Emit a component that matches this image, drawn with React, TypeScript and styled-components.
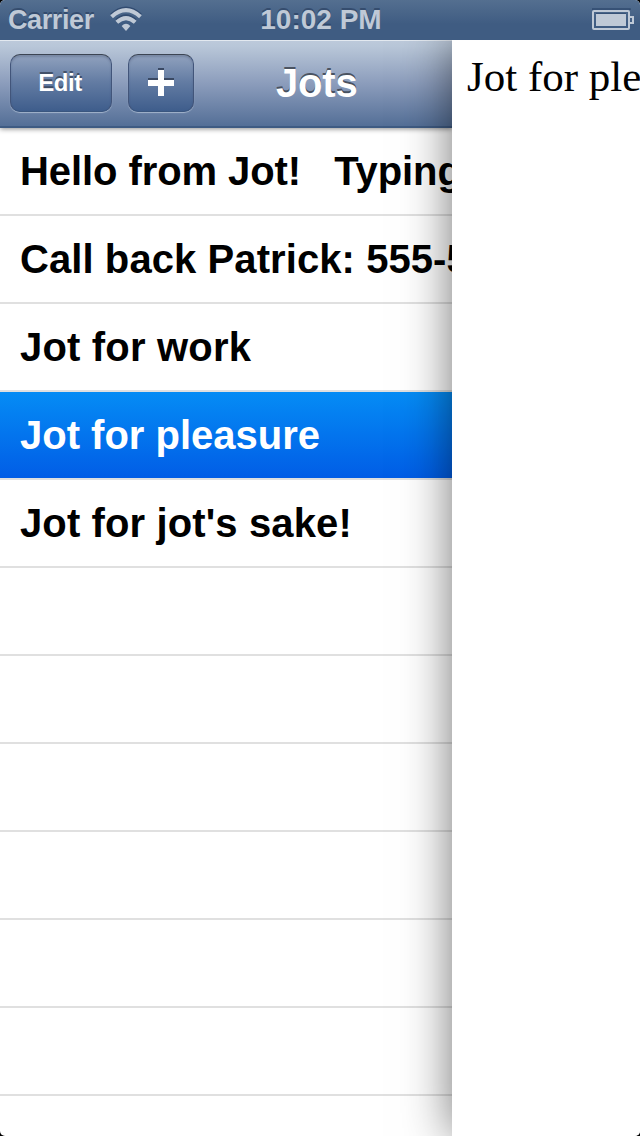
import React from "react";
import styled, { createGlobalStyle } from "styled-components";

const GlobalStyle = createGlobalStyle`
  body { margin: 0; background: #000; }
  * { box-sizing: border-box; }
`;

const Screen = styled.div`
  width: 640px;
  height: 1136px;
  display: flex;
  flex-direction: column;
  overflow: hidden;
  border-radius: 5px;
  background: #fff;
  font-family: "Liberation Sans", Arial, sans-serif;
  font-weight: bold;
`;

const StatusBar = styled.header`
  position: relative;
  z-index: 2;
  flex: none;
  height: 40px;
  display: grid;
  grid-template-columns: 1fr auto 1fr;
  align-items: center;
  padding: 0 6px 0 8px;
  font-size: 28px;
  line-height: 40px;
  color: #bfc9d6;
  text-shadow: 0 -2px 0 rgba(30, 50, 82, 0.5);
  background: linear-gradient(#546f90, #3f5c82 60%, #3f5c82);
`;

const Carrier = styled.div`
  display: flex;
  align-items: center;
  gap: 16px;
  font-size: 27px;
  letter-spacing: -0.4px;
`;

const WifiIcon = styled.svg`
  margin-bottom: 2px;
`;

const Battery = styled.svg`
  justify-self: end;
  margin-top: -2px;
`;

const Body = styled.div`
  flex: 1;
  min-height: 0;
  display: flex;
`;

const Sidebar = styled.aside`
  width: 452px;
  flex: none;
  overflow: hidden;
  display: flex;
  flex-direction: column;
`;

const NavBar = styled.nav`
  position: relative;
  flex: none;
  height: 88px;
  display: flex;
  align-items: flex-start;
  gap: 16px;
  padding: 14px 10px 0;
  border-bottom: 2px solid #3e5b83;
  background: linear-gradient(#bdcadb, #b8c6d8 8%, #8c9dbc 50%, #546f97);
  box-shadow: inset 0 1px 0 #e3e9f0, 0 1px 5px rgba(0, 0, 0, 0.45);
`;

const NavButton = styled.button<{ $width: number }>`
  width: ${({ $width }) => $width}px;
  height: 58px;
  display: flex;
  align-items: center;
  justify-content: center;
  padding: 0;
  border: 1.5px solid;
  border-color: #3c4554 #42557a #3a567f;
  border-radius: 10px;
  background: linear-gradient(#92a3bf, #637ca3 48%, #3d5c8b) border-box;
  box-shadow: inset 0 2px 2px rgba(50, 65, 90, 0.25), 0 1px 1px rgba(205, 217, 232, 0.6);
  color: #fff;
  font: bold 24px "Liberation Sans", Arial, sans-serif;
  letter-spacing: -0.4px;
  text-shadow: 0 -2px 0 rgba(50, 62, 82, 0.75);
`;

const ButtonLabel = styled.span`
  padding-right: 2px;
`;

const PlusIcon = styled.svg`
  margin-bottom: 2px;
`;

const Title = styled.h1`
  margin: 0 0 0 66px;
  font-size: 40px;
  line-height: 58px;
  letter-spacing: -0.2px;
  color: #fff;
  text-shadow: 0 -2px 0 rgba(60, 68, 80, 0.85);
`;

const List = styled.ul`
  margin: 0;
  padding: 0;
  list-style: none;
`;

const Row = styled.li<{ $selected?: boolean; $tracking?: number }>`
  height: 88px;
  padding-left: 20px;
  border-bottom: 2px solid #e0e0e0;
  font-size: 40px;
  line-height: 87px;
  letter-spacing: ${({ $tracking = 0 }) => $tracking}px;
  white-space: pre;
  color: ${({ $selected }) => ($selected ? "#fff" : "#000")};
  background: ${({ $selected }) =>
    $selected ? "linear-gradient(#058cf5, #015de6) padding-box" : "none"};
`;

const Note = styled.main`
  position: relative;
  flex: 1;
  min-width: 0;
  background: #fff;
  box-shadow: 0 0 46px rgba(0, 0, 0, 0.55);
`;

const NoteText = styled.p`
  margin: 0;
  padding: 11px 0 0 15px;
  overflow: hidden;
  white-space: nowrap;
  font: 400 43px/52px "Liberation Serif", serif;
  letter-spacing: 0;
  color: #000;
`;

const jots = [
  { text: "Hello from Jot!   Typing is easy", tracking: -0.08 },
  { text: "Call back Patrick: 555-5555", tracking: 0.08 },
  { text: "Jot for work", tracking: 0.18 },
  { text: "Jot for pleasure", selected: true },
  { text: "Jot for jot's sake!", tracking: 0.12 },
];

const emptyRows = 7;

export default function App() {
  return (
    <>
      <GlobalStyle />
      <Screen>
        <StatusBar>
          <Carrier>
            Carrier
            <WifiIcon width="32" height="26" viewBox="0 0 32 26">
              <path d="M1.600 9Q16 -4 30.400 9M6.800 14.500Q16 6 25.200 14.500" fill="none" stroke="#314b70" strokeWidth="4" />
              <path d="M1.600 10.800Q16 -2.400 30.400 10.800M6.800 16.300Q16 7.800 25.200 16.300" fill="none" stroke="#bfc9d6" strokeWidth="4" />
              <path d="M11.600 20Q16 15.600 20.400 20L16 25Z" fill="#bfc9d6" />
            </WifiIcon>
          </Carrier>
          <span>10:02 PM</span>
          <Battery width="42" height="24" viewBox="0 0 42 24">
            <path d="M0 3V2H38V3M4 7H34" fill="none" stroke="#314b70" strokeWidth="1.500" />
            <rect x="1" y="4" width="36" height="18" rx="1" fill="none" stroke="#bfc9d6" strokeWidth="2" />
            <rect x="4" y="7" width="30" height="12" fill="#bfc9d6" />
            <path d="M38 10h3v6h-3" fill="none" stroke="#bfc9d6" strokeWidth="2" />
          </Battery>
        </StatusBar>
        <Body>
          <Sidebar>
            <NavBar>
              <NavButton $width={102}>
                <ButtonLabel>Edit</ButtonLabel>
              </NavButton>
              <NavButton $width={66} aria-label="Add">
                <PlusIcon width="26" height="28" viewBox="0 0 26 28">
                  <path d="M10 0h6v10h10v6H0v-6h10z" fill="#3a4963" />
                  <path d="M10 2h6v10h10v6H16v10h-6V18H0v-6h10z" fill="#fff" />
                </PlusIcon>
              </NavButton>
              <Title>Jots</Title>
            </NavBar>
            <List>
              {jots.map(({ text, tracking, selected }) => (
                <Row key={text} $selected={selected} $tracking={tracking}>
                  {text}
                </Row>
              ))}
              {Array.from({ length: emptyRows }, (_, i) => (
                <Row key={i} />
              ))}
            </List>
          </Sidebar>
          <Note>
            <NoteText>Jot for pleasure</NoteText>
          </Note>
        </Body>
      </Screen>
    </>
  );
}
